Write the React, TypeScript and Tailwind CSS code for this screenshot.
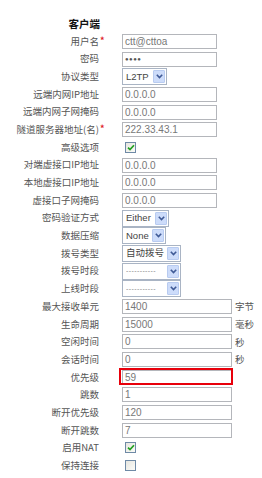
import type { ReactNode } from 'react';

type Row = {
  label: string;
  required?: boolean;
  kind: 'text' | 'select' | 'check';
  value?: string;
  wide?: boolean;
  unit?: string;
  width?: number;
  checked?: boolean;
  highlight?: boolean;
  dashes?: boolean;
};

const rows: Row[] = [
  { label: '用户名', required: true, kind: 'text', value: 'ctt@cttoa' },
  { label: '密码', kind: 'text', value: '●●●●' },
  { label: '协议类型', kind: 'select', value: 'L2TP', width: 45 },
  { label: '远端内网IP地址', kind: 'text', value: '0.0.0.0' },
  { label: '远端内网子网掩码', kind: 'text', value: '0.0.0.0' },
  { label: '隧道服务器地址(名)', required: true, kind: 'text', value: '222.33.43.1' },
  { label: '高级选项', kind: 'check', checked: true },
  { label: '对端虚接口IP地址', kind: 'text', value: '0.0.0.0' },
  { label: '本地虚接口IP地址', kind: 'text', value: '0.0.0.0' },
  { label: '虚接口子网掩码', kind: 'text', value: '0.0.0.0' },
  { label: '密码验证方式', kind: 'select', value: 'Either', width: 47 },
  { label: '数据压缩', kind: 'select', value: 'None', width: 44 },
  { label: '拨号类型', kind: 'select', value: '自动拨号', width: 59 },
  { label: '拨号时段', kind: 'select', value: '-----------', width: 59, dashes: true },
  { label: '上线时段', kind: 'select', value: '-----------', width: 59, dashes: true },
  { label: '最大接收单元', kind: 'text', value: '1400', wide: true, unit: '字节' },
  { label: '生命周期', kind: 'text', value: '15000', wide: true, unit: '毫秒' },
  { label: '空闲时间', kind: 'text', value: '0', wide: true, unit: '秒' },
  { label: '会话时间', kind: 'text', value: '0', wide: true, unit: '秒' },
  { label: '优先级', kind: 'text', value: '59', wide: true, highlight: true },
  { label: '跳数', kind: 'text', value: '1', wide: true },
  { label: '断开优先级', kind: 'text', value: '120', wide: true },
  { label: '断开跳数', kind: 'text', value: '7', wide: true },
  { label: '启用NAT', kind: 'check', checked: true },
  { label: '保持连接', kind: 'check', checked: false },
];

function TextBox({ row }: { row: Row }) {
  return (
    <div className="relative flex items-center">
      <div
        className={`flex h-[15px] items-center border border-[#b4b6bb] bg-white pl-[2px] text-[10px] text-[#777] ${
          row.wide ? 'w-[110px]' : 'w-[95px]'
        }`}
        style={{ fontFamily: '"Liberation Sans", Arial, sans-serif' }}
      >
        {row.value === '●●●●' ? (
          <span className="text-[6px] tracking-[0.5px] text-[#555]">●●●●</span>
        ) : (
          row.value
        )}
      </div>
      {row.highlight && (
        <span className="absolute -left-[3px] -top-[1.5px] h-[17px] w-[114px] border-2 border-[#e8000b]" />
      )}
      {row.unit && <span className="ml-[3px] text-[9.5px] text-[#555]">{row.unit}</span>}
    </div>
  );
}

function SelectBox({ row }: { row: Row }) {
  return (
    <div
      className="flex h-[17px] items-center border border-[#a9b4c4] bg-white pl-[3px] pr-[1px]"
      style={{ width: row.width }}
    >
      <span
        className={`flex-1 overflow-hidden whitespace-nowrap ${
          row.dashes ? 'text-[7px] tracking-[0.4px] text-[#888]' : 'text-[9.5px] text-[#444]'
        }`}
        style={{ fontFamily: '"Liberation Sans", "Noto Sans CJK SC", sans-serif' }}
      >
        {row.value}
      </span>
      <span className="flex h-[13px] w-[12px] shrink-0 items-center justify-center rounded-[1px] border border-[#b8cbf0] bg-[#cddcfa]">
        <svg width="7" height="5" viewBox="0 0 7 5">
          <path d="M0.8 0.8 L3.5 3.6 L6.2 0.8" fill="none" stroke="#3f5a96" strokeWidth="1.6" />
        </svg>
      </span>
    </div>
  );
}

function CheckBox({ checked }: { checked?: boolean }) {
  return (
    <div className="ml-[3px] flex h-[11px] w-[11px] items-center justify-center border border-[#6f8aa6] bg-gradient-to-br from-[#e6e6e0] to-[#fbfbf8]">
      {checked && (
        <svg width="8" height="7" viewBox="0 0 8 7">
          <path d="M1 3.6 L3 5.6 L7 1.2" fill="none" stroke="#22a020" strokeWidth="1.7" />
        </svg>
      )}
    </div>
  );
}

function FormRow({ label, required, children }: { label: string; required?: boolean; children: ReactNode }) {
  return (
    <div className="flex h-[17.68px] items-center">
      <div className="relative w-[99px] shrink-0 text-right text-[9.5px] leading-none text-[#555]">
        {label}
        {required && (
          <span className="absolute left-[100%] top-[-1px] pl-[1px] text-[9px] font-bold text-[#e0202a]">*</span>
        )}
      </div>
      <div className="ml-[23px] flex items-center">{children}</div>
    </div>
  );
}

export default function App() {
  return (
    <div
      className="h-[478px] w-[262px] overflow-hidden bg-white pt-[15px]"
      style={{ fontFamily: '"Noto Sans CJK SC", "Liberation Sans", sans-serif' }}
    >
      <div className="flex h-[17.68px] items-center">
        <div className="w-[100px] text-right text-[10.5px] font-bold leading-none text-[#111]">客户端</div>
      </div>
      {rows.map((row) => (
        <FormRow key={row.label} label={row.label} required={row.required}>
          {row.kind === 'text' && <TextBox row={row} />}
          {row.kind === 'select' && <SelectBox row={row} />}
          {row.kind === 'check' && <CheckBox checked={row.checked} />}
        </FormRow>
      ))}
    </div>
  );
}
